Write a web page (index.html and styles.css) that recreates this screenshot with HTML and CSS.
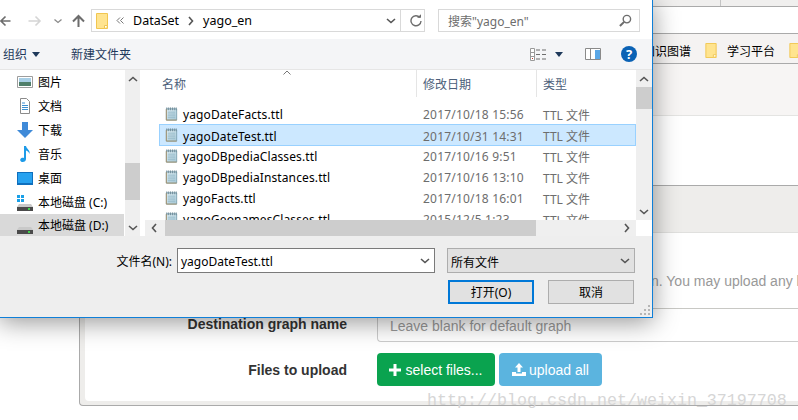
FILE: index.html
```html
<!DOCTYPE html>
<html lang="zh-CN">
  <head>
    <meta charset="UTF-8" />
    <title>Upload files</title>
    <link rel="stylesheet" href="styles.css">
  </head>
  <body>
    <svg class="defs" width="0" height="0">
      <defs>
        <linearGradient id="paper" x1="0" y1="0" x2="1" y2="1">
          <stop offset="0" stop-color="#e3f0f5"/>
          <stop offset="1" stop-color="#a9cbd9"/>
        </linearGradient>
      </defs>
      <symbol id="file" viewBox="0 0 16 16">
        <path d="M2.500 2.500h11v12h-11z" fill="url(#paper)" stroke="#7fa3b3"/>
        <path d="M4 6h8M4 8h8M4 10h8M4 12h8" stroke="#93b8c8"/>
        <path d="M3 1v3M5 1v3M7 1v3M9 1v3M11 1v3M13 1v3" stroke="#6d8a96"/>
        <path d="M2.500 3v11.500h11" fill="none" stroke="#a8946e"/>
      </symbol>
      <symbol id="folder" viewBox="0 0 12 16">
        <path d="M.5.500h11v15h-11z" fill="#ffe48f" stroke="#f1c650"/>
        <path d="M8.500 15.500v-3h3" fill="#fff" stroke="#f1c650"/>
      </symbol>
      <symbol id="chev-up" viewBox="0 0 10 6"><path d="M1 5l4-3.500 4 3.500" fill="none" stroke="#555" stroke-width="1.600"/></symbol>
      <symbol id="chev-down" viewBox="0 0 10 6"><path d="M1 1l4 3.500 4-3.500" fill="none" stroke="#555" stroke-width="1.600"/></symbol>
      <symbol id="chev-left" viewBox="0 0 6 10"><path d="M5 1L1.500 5 5 9" fill="none" stroke="#555" stroke-width="1.600"/></symbol>
      <symbol id="chev-right" viewBox="0 0 6 10"><path d="M1 1l3.500 4L1 9" fill="none" stroke="#555" stroke-width="1.600"/></symbol>
      <symbol id="caret" viewBox="0 0 8 5"><path d="M0 0h8L4 5z" fill="#1e395b"/></symbol>
      <symbol id="drive" viewBox="0 0 16 8">
        <path d="M2 1h12l2 3v3H0V4z" fill="#c9c9c9"/>
        <path d="M0 4h16v4H0z" fill="#4a4a4a"/>
        <path d="M11 5h2v2h-2z" fill="#3fd24a"/>
      </symbol>
    </svg>

    <div class="tabstrip"><div class="tab"></div></div>
    <div class="addressbar"></div>
    <div class="bookmarks">
      <span>知识图谱</span>
      <svg class="bookmark-folder"><use href="#folder"/></svg>
      <span>学习平台</span>
      <svg class="bookmark-folder"><use href="#folder"/></svg>
    </div>
    <div class="pagehead"></div>

    <div class="card">
      <div class="card-head"></div>
      <div class="card-body">
        <div class="help-line">n. You may upload any l</div>
        <div class="form-row dest-row">
          <label class="form-label">Destination graph name</label>
          <div class="text-field">Leave blank for default graph</div>
        </div>
        <div class="form-row files-row">
          <label class="form-label">Files to upload</label>
          <button class="btn btn-green">
            <svg class="btn-icon" viewBox="0 0 12 12"><path d="M4.500 0h3v4.500H12v3H7.500V12h-3V7.500H0v-3h4.500z" fill="#fff"/></svg>select files...
          </button>
          <button class="btn btn-blue">
            <svg class="btn-icon upload-icon" viewBox="0 0 14 13"><path d="M7 0l4 4.500H8.500V9h-3V4.500H3zM0 9h4v1.500h6V9h4v4H0z" fill="#fff"/></svg>upload all
          </button>
        </div>
      </div>
    </div>

    <div class="watermark">http://blog.csdn.net/weixin_37197708</div>

    <div class="dialog">
      <div class="nav-row">
        <svg class="nav-arrows" viewBox="0 0 90 20" width="90" height="20">
          <path d="M10 10H1M5 5.500L.5 10 5 14.500" fill="none" stroke="#6d6d6d" stroke-width="1.600"/>
          <path d="M28 10h11M35 5.500l4.500 4.500-4.500 4.500" fill="none" stroke="#d5d5d5" stroke-width="1.600"/>
          <path d="M54 8.500l3.500 3 3.500-3" fill="none" stroke="#8a8a8a" stroke-width="1.300"/>
          <path d="M78 16V5M72.500 10.500L78 5l5.500 5.500" fill="none" stroke="#6d6d6d" stroke-width="2"/>
        </svg>
        <div class="address">
          <svg class="address-folder"><use href="#folder"/></svg>
          <svg class="crumb-sep" viewBox="0 0 8 7" width="8" height="7"><path d="M4 .5L1 3.500 4 6.500M7.500.5l-3 3 3 3" fill="none" stroke="#777"/></svg>
          <span>DataSet</span>
          <svg class="crumb-arrow"><use href="#chev-right"/></svg>
          <span>yago_en</span>
          <svg class="address-chev"><use href="#chev-down"/></svg>
        </div>
        <div class="refresh">
          <svg viewBox="0 0 12 13" width="12" height="13"><path d="M9.800 3.500A5 5 0 1 0 11 7" fill="none" stroke="#6d6d6d" stroke-width="1.400"/><path d="M7 3.800h4v-3.500z" fill="#6d6d6d"/></svg>
        </div>
        <div class="search">
          <span>搜索"yago_en"</span>
          <svg viewBox="0 0 14 14" width="13" height="13"><circle cx="8.500" cy="5.500" r="4" fill="none" stroke="#6d6d6d" stroke-width="1.500"/><path d="M5.500 8.500L1 13" stroke="#6d6d6d" stroke-width="2.200"/></svg>
        </div>
      </div>

      <div class="toolbar">
        <span class="tool-menu">组织</span>
        <svg class="tool-caret"><use href="#caret"/></svg>
        <span class="tool-new">新建文件夹</span>
        <svg class="view-icon" viewBox="0 0 16 13" width="16" height="13">
          <path d="M.5.500h4v12h-4z" fill="#fff" stroke="#9a9a9a"/>
          <path d="M1 4.500h3M1 8.500h3" stroke="#9a9a9a"/>
          <path d="M2 10h1v1H2z" fill="#c0392b"/>
          <path d="M6 2h4M12 2h4M6 6.500h4M12 6.500h4M6 11h4M12 11h4" stroke="#6d6d6d"/>
        </svg>
        <svg class="tool-caret view-caret"><use href="#caret"/></svg>
        <svg class="pane-icon" viewBox="0 0 16 12" width="16" height="12">
          <path d="M.5.500h15v11H.5z" fill="#fff" stroke="#8a8a8a"/>
          <path d="M5.500 1v10" stroke="#8a8a8a"/>
          <path d="M10 2h5v9h-5z" fill="#5aa7e6"/>
        </svg>
        <span class="help-icon">?</span>
      </div>

      <div class="dialog-body">
        <div class="nav-pane">
          <div class="nav-item">
            <svg viewBox="0 0 16 12" width="16" height="12"><path d="M.5.500h15v11H.5z" fill="#fff" stroke="#9d9d9d"/><path d="M2 2h12v4H2z" fill="#a8cfe6"/><path d="M2 6h12v4H2z" fill="#4f7f6a"/></svg>
            图片
          </div>
          <div class="nav-item">
            <svg viewBox="0 0 16 16" width="16" height="16"><path d="M3.500.500h6l3 3v12h-9z" fill="#fff" stroke="#8b8b8b"/><path d="M5 5h3M5 7.500h6M5 9.500h6M5 11.500h6" stroke="#3c8fd0"/></svg>
            文档
          </div>
          <div class="nav-item">
            <svg viewBox="0 0 16 16" width="16" height="16"><path d="M5 0h6v8h5l-8 8-8-8h5z" fill="#3f8ad8"/></svg>
            下载
          </div>
          <div class="nav-item">
            <svg viewBox="0 0 16 18" width="16" height="18"><path d="M7 1h2c.5 3 4.500 4 3.500 8-.5-2-2-3-3.500-3.500V14c0 2-2 3.500-4 3s-2.500-3-.5-4c.8-.4 1.800-.4 2.500 0z" fill="#1e9be8"/></svg>
            音乐
          </div>
          <div class="nav-item">
            <svg viewBox="0 0 16 13" width="16" height="13"><path d="M0 0h16v13H0z" fill="#0f6fbd"/><path d="M1 1h14v10H1z" fill="#27a2f0"/></svg>
            桌面
          </div>
          <div class="nav-item">
            <span class="drive-stack">
              <svg class="win-logo" viewBox="0 0 7 7" width="7" height="7"><path d="M0 0h3v3H0zM4 0h3v3H4zM0 4h3v3H0zM4 4h3v3H4z" fill="#19a0e8"/></svg>
              <svg class="drive-icon"><use href="#drive"/></svg>
            </span>
            本地磁盘 (C:)
          </div>
          <div class="nav-item nav-selected">
            <span class="drive-stack">
              <svg class="drive-icon"><use href="#drive"/></svg>
            </span>
            本地磁盘 (D:)
          </div>
        </div>
        <div class="vscroll nav-scroll">
          <svg class="scroll-btn"><use href="#chev-up"/></svg>
          <div class="thumb nav-thumb"></div>
          <svg class="scroll-btn bottom-btn"><use href="#chev-down"/></svg>
        </div>
        <div class="list-area">
          <div class="list">
            <div class="list-head">
              <svg class="sort-caret" viewBox="0 0 8 5" width="8" height="5"><path d="M.5 4.500L4 1l3.500 3.500" fill="none" stroke="#777"/></svg>
              <span class="col-name">名称</span>
              <span class="col-date">修改日期</span>
              <span class="col-type">类型</span>
            </div>
            <div class="file"><svg class="file-icon"><use href="#file"/></svg><span class="file-name">yagoDateFacts.ttl</span><span class="file-date">2017/10/18 15:56</span><span class="file-type">TTL 文件</span></div>
            <div class="file file-selected"><svg class="file-icon"><use href="#file"/></svg><span class="file-name">yagoDateTest.ttl</span><span class="file-date">2017/10/31 14:31</span><span class="file-type">TTL 文件</span></div>
            <div class="file"><svg class="file-icon"><use href="#file"/></svg><span class="file-name">yagoDBpediaClasses.ttl</span><span class="file-date">2017/10/16 9:51</span><span class="file-type">TTL 文件</span></div>
            <div class="file"><svg class="file-icon"><use href="#file"/></svg><span class="file-name">yagoDBpediaInstances.ttl</span><span class="file-date">2017/10/16 13:10</span><span class="file-type">TTL 文件</span></div>
            <div class="file"><svg class="file-icon"><use href="#file"/></svg><span class="file-name">yagoFacts.ttl</span><span class="file-date">2017/10/18 16:01</span><span class="file-type">TTL 文件</span></div>
            <div class="file"><svg class="file-icon"><use href="#file"/></svg><span class="file-name">yagoGeonamesClasses.ttl</span><span class="file-date">2015/12/5 1:23</span><span class="file-type">TTL 文件</span></div>
          </div>
          <div class="vscroll list-scroll">
            <svg class="scroll-btn"><use href="#chev-up"/></svg>
            <div class="thumb list-thumb"></div>
            <svg class="scroll-btn bottom-btn"><use href="#chev-down"/></svg>
          </div>
          <div class="hscroll">
            <svg class="hscroll-btn"><use href="#chev-left"/></svg>
            <div class="hthumb"></div>
            <svg class="hscroll-btn hscroll-end"><use href="#chev-right"/></svg>
          </div>
        </div>
      </div>

      <div class="dialog-foot">
        <div class="foot-row">
          <label class="name-label">文件名(N):</label>
          <div class="name-input">yagoDateTest.ttl<svg class="combo-chev"><use href="#chev-down"/></svg></div>
          <div class="type-select">所有文件<svg class="combo-chev"><use href="#chev-down"/></svg></div>
        </div>
        <div class="foot-buttons">
          <button class="win-btn win-btn-default">打开(O)</button>
          <button class="win-btn">取消</button>
        </div>
        <svg class="grip" viewBox="0 0 10 10" width="10" height="10"><path d="M8 0h2v2H8zM4 4h2v2H4zM8 4h2v2H8zM0 8h2v2H0zM4 8h2v2H4zM8 8h2v2H8z" fill="#b5b5b5"/></svg>
      </div>
    </div>
  </body>
</html>
```

FILE: styles.css
```css
html, body {
  margin: 0;
  padding: 0;
  height: 420px;
  overflow: hidden;
  background: #fff;
}
body {
  position: relative;
  font-family: "Liberation Sans", Arial, sans-serif;
  font-size: 14px;
  color: #333;
}
.defs {
  position: absolute;
}

/* browser and page behind the dialog */
.tabstrip {
  height: 6px;
  background: #f0efee;
  border-bottom: 1px solid #aaa;
}
.tab {
  width: 720px;
  height: 6px;
  border-right: 1px solid #c4c4c4;
}
.addressbar {
  height: 26px;
  background: #fff;
  border-bottom: 1px solid #aaa;
}
.bookmarks {
  display: flex;
  align-items: center;
  height: 26px;
  padding: 3px 0 0 643px;
  overflow: hidden;
  background: #f5f3f2;
  border-bottom: 1px solid #aaa;
  font-family: "Noto Sans CJK SC", sans-serif;
  font-size: 12px;
  color: #000;
  white-space: nowrap;
}
.bookmark-folder {
  flex: none;
  width: 12px;
  height: 15px;
  margin: 0 10px 0 14px;
}
.pagehead {
  height: 51px;
  background: #f7f5f4;
  border-bottom: 1px solid #e4e4e2;
  margin-bottom: 69px;
}
.card {
  margin-left: 79px;
  height: 221px;
  box-sizing: border-box;
  background: #eeedeb;
  border-top: 1px solid #aaa;
  border-left: 1px solid #aaa;
  border-bottom: 1px solid #aaa;
  border-bottom-left-radius: 4px;
  padding-bottom: 5px;
}
.card-head {
  height: 46px;
  border-bottom: 1px solid #e0e0de;
}
.card-body {
  height: 168px;
  margin-left: 5px;
  background: #fff;
  border-radius: 0 0 0 4px;
}
.help-line {
  height: 76px;
  box-sizing: border-box;
  margin-left: 292px;
  padding: 40px 0 0 274px;
  border-bottom: 1px solid #c8c8c4;
  color: #999;
  white-space: nowrap;
  line-height: 16px;
}
.form-row {
  display: flex;
  align-items: center;
}
.dest-row {
  height: 33px;
}
.dest-row .form-label {
  padding-bottom: 3px;
}
.files-row {
  height: 33px;
  margin-top: 11px;
}
.form-label {
  flex: none;
  width: 262px;
  margin-right: 30px;
  text-align: right;
  font-weight: bold;
}
.text-field {
  flex: 1;
  height: 33px;
  box-sizing: border-box;
  padding: 9px 12px 0;
  line-height: 17px;
  color: #999;
  border-left: 1px solid #ccc;
  border-bottom: 1px solid #ccc;
  border-bottom-left-radius: 4px;
}
.btn {
  display: flex;
  align-items: center;
  height: 33px;
  padding: 0;
  border: 0;
  border-radius: 4px;
  color: #fff;
  font-family: inherit;
  font-size: 14px;
  justify-content: center;
}
.btn-green {
  width: 118px;
  background: #0aa34f;
}
.btn-blue {
  width: 103px;
  margin-left: 4px;
  background: #5bb4df;
}
.btn-icon {
  width: 12px;
  height: 12px;
  margin-right: 4px;
}
.upload-icon {
  width: 14px;
  height: 13px;
  margin-right: 3px;
}
.watermark {
  position: absolute;
  left: 427px;
  top: 391px;
  font-family: "Liberation Mono", monospace;
  font-size: 16.67px;
  line-height: 19px;
  color: #d6d6d6;
  white-space: nowrap;
}

/* file dialog */
.dialog {
  position: absolute;
  left: -1px;
  top: -1px;
  width: 652px;
  height: 317px;
  display: flex;
  flex-direction: column;
  background: #fff;
  border: 1px solid #0f7fd8;
  box-shadow: 0 4px 24px rgba(0, 0, 0, 0.42);
  font-family: "Noto Sans", "Noto Sans CJK SC", sans-serif;
  font-size: 12px;
  color: #000;
}
.nav-row {
  flex: none;
  display: flex;
  align-items: center;
  height: 39px;
  box-sizing: border-box;
  padding-top: 2px;
}
.nav-arrows {
  flex: none;
  width: 91px;
}
.address {
  display: flex;
  align-items: center;
  width: 309px;
  height: 23px;
  box-sizing: border-box;
  border: 1px solid #d9d9d9;
  border-right: 0;
  font-size: 12.500px;
}
.address-folder {
  flex: none;
  width: 12px;
  height: 16px;
  margin: 0 8px 0 4px;
}
.crumb-sep {
  flex: none;
  margin-right: 9px;
}
.crumb-arrow {
  flex: none;
  width: 6px;
  height: 10px;
  margin: 0 9px;
}
.address-chev {
  width: 10px;
  height: 6px;
  margin-left: auto;
  margin-right: 4px;
}
.refresh {
  display: flex;
  align-items: center;
  justify-content: center;
  width: 25px;
  height: 23px;
  box-sizing: border-box;
  padding-left: 7px;
  border: 1px solid #d9d9d9;
}
.search {
  display: flex;
  align-items: center;
  justify-content: space-between;
  width: 202px;
  height: 23px;
  box-sizing: border-box;
  margin-left: 13px;
  padding: 0 7px 0 9px;
  border: 1px solid #d9d9d9;
  color: #6d6d6d;
}
.toolbar {
  flex: none;
  display: flex;
  align-items: center;
  height: 31px;
  box-sizing: border-box;
  padding-left: 3px;
  background: #f4f5f7;
  border-bottom: 1px solid #e6e6e6;
  color: #1e395b;
}
.tool-menu {
  width: 29px;
}
.tool-caret {
  flex: none;
  width: 8px;
  height: 5px;
}
.tool-new {
  margin-left: 31px;
}
.view-icon {
  flex: none;
  margin-left: 399px;
}
.view-caret {
  margin-left: 9px;
}
.pane-icon {
  flex: none;
  margin-left: 22px;
}
.help-icon {
  flex: none;
  width: 16px;
  height: 16px;
  margin-left: 20px;
  border-radius: 50%;
  background: #0a62b5;
  color: #fff;
  font-weight: bold;
  font-size: 13px;
  line-height: 16px;
  text-align: center;
}
.dialog-body {
  flex: none;
  display: flex;
  height: 166px;
  overflow: hidden;
}
.nav-pane {
  flex: none;
  width: 124px;
  margin-right: 1px;
}
.nav-item {
  display: flex;
  align-items: center;
  height: 24px;
  padding-left: 17px;
  white-space: nowrap;
}
.nav-item svg {
  flex: none;
}
.nav-item > svg,
.drive-stack {
  width: 16px;
  margin-right: 5px;
}
.nav-selected {
  height: 22px;
  background: #d9d9d9;
}
.drive-stack {
  display: flex;
  flex-direction: column;
  justify-content: flex-end;
  height: 18px;
}
.win-logo {
  margin-bottom: 1px;
}
.drive-icon {
  width: 16px;
  height: 8px;
}
.vscroll {
  flex: none;
  display: flex;
  flex-direction: column;
  align-items: center;
  background: #efefef;
}
.nav-scroll {
  width: 15px;
  margin-right: 5px;
}
.scroll-btn {
  flex: none;
  width: 10px;
  height: 6px;
  margin-top: 6px;
}
.bottom-btn {
  margin-top: auto;
  margin-bottom: 5px;
}
.thumb {
  flex: none;
  width: 100%;
  background: #cdcdcd;
}
.nav-thumb {
  height: 37px;
  margin-top: 81px;
}
.list-thumb {
  height: 22px;
  margin-top: 5px;
}
.list-area {
  flex: 1;
  display: grid;
  grid-template-columns: 491px 16px;
  grid-template-rows: 150px 16px;
}
.list {
  overflow: hidden;
}
.list-head {
  position: relative;
  display: flex;
  height: 27px;
  margin-bottom: 6px;
  padding-left: 17px;
  color: #4c607a;
  line-height: 29px;
}
.sort-caret {
  position: absolute;
  left: 138px;
  top: 0;
}
.col-name {
  width: 254px;
}
.col-date {
  width: 113px;
  padding-left: 6px;
  border-left: 1px solid #e5e5e5;
}
.col-type {
  padding-left: 6px;
  border-left: 1px solid #e5e5e5;
}
.file {
  display: flex;
  align-items: center;
  height: 21px;
  box-sizing: border-box;
  margin-left: 14px;
  padding-left: 4px;
  border: 1px solid transparent;
  white-space: nowrap;
}
.file span {
  padding-top: 2px;
}
.file-selected {
  height: 22px;
  margin-bottom: -1px;
  background: #cce8ff;
  border-color: #99d1ff;
}
.file-icon {
  flex: none;
  width: 15px;
  height: 16px;
  margin-right: 4px;
}
.file-name {
  width: 240px;
  letter-spacing: 0.12px;
}
.file-date {
  width: 120px;
  letter-spacing: 0.2px;
  color: #6d6d6d;
}
.file-type {
  color: #6d6d6d;
}
.hscroll {
  display: flex;
  align-items: center;
  background: #efefef;
}
.hscroll-btn {
  flex: none;
  width: 6px;
  height: 10px;
  margin: 0 6px;
}
.hthumb {
  flex: none;
  width: 371px;
  height: 100%;
  margin-left: 2px;
  background: #cdcdcd;
}
.hscroll-end {
  margin-left: auto;
}
.dialog-foot {
  flex: 1;
  position: relative;
  background: #eee;
}
.foot-row {
  display: flex;
  align-items: center;
  height: 25px;
  margin-top: 12px;
}
.name-label {
  width: 172px;
  margin-right: 5px;
  text-align: right;
}
.name-input,
.type-select {
  display: flex;
  align-items: center;
  box-sizing: border-box;
  height: 25px;
  padding: 2px 0 0 3px;
}
.name-input {
  width: 258px;
  background: #fff;
  border: 1px solid #7a7a7a;
}
.type-select {
  width: 188px;
  margin-left: 12px;
  background: #e1e1e1;
  border: 1px solid #adadad;
}
.combo-chev {
  width: 10px;
  height: 6px;
  margin: -2px 4px 0 auto;
}
.foot-buttons {
  display: flex;
  gap: 14px;
  margin: 7px 0 0 448px;
}
.win-btn {
  width: 86px;
  height: 24px;
  padding: 0;
  background: #e1e1e1;
  border: 1px solid #adadad;
  font-family: inherit;
  font-size: 12px;
  color: #000;
}
.win-btn-default {
  border: 2px solid #0078d7;
}
.grip {
  position: absolute;
  right: 2px;
  bottom: 2px;
}
```
